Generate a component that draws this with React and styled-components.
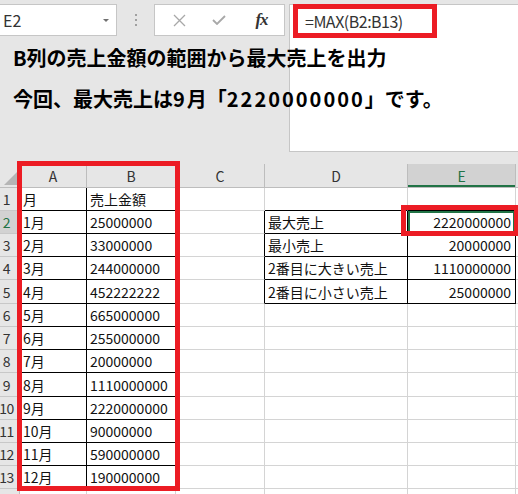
import React from "react";
import styled, { createGlobalStyle } from "styled-components";

const GREEN = "#217346";
const RED = "#ec1c24";

const GlobalStyle = createGlobalStyle`
  html, body { margin: 0; padding: 0; }
  body {
    background: #e6e6e6;
    font-family: "Noto Sans CJK JP", "Noto Sans", sans-serif;
    overflow: hidden;
  }
`;

const Page = styled.div`
  position: relative;
  width: 518px;
  height: 494px;
  overflow: hidden;
  background: #e6e6e6;
`;

const TopArea = styled.div`
  display: flex;
  height: 164px;
  padding-top: 4px;
  box-sizing: border-box;
`;

const LeftPanel = styled.div`
  width: 289px;
  flex: none;
`;

const Toolbar = styled.div`
  display: flex;
  height: 32px;
`;

const NameBox = styled.div`
  width: 117px;
  box-sizing: border-box;
  background: #fff;
  border: 1px solid #c6c6c6;
  border-left: none;
  display: flex;
  align-items: center;
  justify-content: space-between;
  padding: 0 7px 0 3px;
  font-size: 16px;
  color: #333;
`;

const DropArrow = styled.span`
  width: 0;
  height: 0;
  border-left: 3px solid transparent;
  border-right: 3px solid transparent;
  border-top: 3px solid #707070;
`;

const Grip = styled.div`
  width: 37px;
  display: flex;
  flex-direction: column;
  align-items: center;
  justify-content: center;
  gap: 3px;
`;

const GripDot = styled.span`
  width: 2px;
  height: 2px;
  background: #a0a0a0;
`;

const ButtonBox = styled.div`
  width: 131px;
  box-sizing: border-box;
  background: #fff;
  border: 1px solid #c6c6c6;
  display: grid;
  grid-template-columns: 40px 40px 1fr;
  padding-left: 4px;
  align-items: center;
  justify-items: center;
`;

const FxLabel = styled.span`
  font-family: "Liberation Serif", serif;
  font-style: italic;
  font-weight: bold;
  font-size: 17px;
  color: #333;
  letter-spacing: -1px;
`;

const FormulaPanel = styled.div`
  flex: 1;
  height: 148px;
  background: #fff;
  border: 1px solid #c6c6c6;
  border-right: none;
  box-sizing: border-box;
  padding: 5px 0 0 15px;
  font-size: 16px;
  line-height: 22px;
  letter-spacing: -0.5px;
  color: #333;
`;

const Note = styled.div`
  position: absolute;
  left: 13px;
  top: 37px;
  font-size: 20px;
  line-height: 41px;
  font-weight: bold;
  color: #000;
`;

const Digits = styled.span`
  letter-spacing: 2px;
`;

const Sheet = styled.div`
  display: grid;
  grid-template-columns: 20px 67px 89px 89px 143px 108px 1fr;
  grid-template-rows: 24px 23px 23px 23px 23px 24px 23px 23px 23px 24px 23px 23px 23px 23px 23px;
  background: #fff;
`;

const Cell = styled.div`
  box-sizing: border-box;
  border-right: 1px solid ${(p) => (p.$rightBlack ? "#000" : "#d4d4d4")};
  border-bottom: 1px solid ${(p) => (p.$bottomBlack ? "#000" : "#d4d4d4")};
  display: flex;
  align-items: center;
  justify-content: ${(p) => (p.$align === "right" ? "flex-end" : "flex-start")};
  padding: 0 4px 0 3px;
  font-size: 14px;
  color: #111;
  white-space: nowrap;
  overflow: hidden;
  background: #fff;
  box-shadow: ${(p) => (p.$selected ? `inset 0 0 0 2px ${GREEN}` : "none")};
`;

const ColHeader = styled.div`
  box-sizing: border-box;
  background: ${(p) => (p.$active ? "#d2d2d2" : "#e6e6e6")};
  color: ${(p) => (p.$active ? GREEN : "#333")};
  border-right: 1px solid #bdbdbd;
  border-bottom: 1px solid #bdbdbd;
  box-shadow: ${(p) => (p.$active ? `inset 0 -2px 0 ${GREEN}` : "none")};
  display: flex;
  align-items: center;
  justify-content: center;
  font-size: 14px;
`;

const RowHeader = styled.div`
  box-sizing: border-box;
  background: ${(p) => (p.$active ? "#d2d2d2" : "#e6e6e6")};
  color: ${(p) => (p.$active ? GREEN : "#333")};
  border-right: 1px solid #bdbdbd;
  border-bottom: 1px solid #c8c8c8;
  display: flex;
  align-items: center;
  justify-content: center;
  padding-right: 6px;
  font-size: 14px;
  letter-spacing: -0.5px;
  overflow: visible;
  white-space: nowrap;
`;

const Corner = styled.div`
  box-sizing: border-box;
  background: #e6e6e6;
  border-right: 1px solid #bdbdbd;
  border-bottom: 1px solid #bdbdbd;
  display: flex;
  align-items: flex-end;
  justify-content: flex-end;
  padding: 0 2px 2px 0;
`;

const Highlight = styled.div`
  position: absolute;
  box-sizing: border-box;
  border: 5px solid ${RED};
  pointer-events: none;
`;

const boxes = [
  { r1: 1, r2: 13, c1: 1, c2: 2 },
  { r1: 2, r2: 5, c1: 4, c2: 5 },
];
const inBox = (r, c) => boxes.some((b) => r >= b.r1 && r <= b.r2 && c >= b.c1 && c <= b.c2);

const ab = [
  ["月", "売上金額"],
  ["1月", "25000000"],
  ["2月", "33000000"],
  ["3月", "244000000"],
  ["4月", "452222222"],
  ["5月", "665000000"],
  ["6月", "255000000"],
  ["7月", "20000000"],
  ["8月", "1110000000"],
  ["9月", "2220000000"],
  ["10月", "90000000"],
  ["11月", "590000000"],
  ["12月", "190000000"],
];

const de = {
  2: ["最大売上", "2220000000"],
  3: ["最小売上", "20000000"],
  4: ["2番目に大きい売上", "1110000000"],
  5: ["2番目に小さい売上", "25000000"],
};

const cols = ["A", "B", "C", "D", "E", ""];

function cellContent(r, c) {
  if (r >= 1 && r <= 13 && (c === 1 || c === 2)) return ab[r - 1][c - 1];
  if (de[r] && c === 4) return de[r][0];
  if (de[r] && c === 5) return de[r][1];
  return "";
}

export default function App() {
  const rows = [];
  for (let r = 1; r <= 14; r++) {
    rows.push(
      <RowHeader key={`rh${r}`} $active={r === 2}>
        {r <= 13 ? r : ""}
      </RowHeader>
    );
    for (let c = 1; c <= 6; c++) {
      const text = cellContent(r, c);
      const isNum = c === 5 && /^\d+$/.test(text);
      rows.push(
        <Cell
          key={`c${r}-${c}`}
          $rightBlack={inBox(r, c) || inBox(r, c + 1)}
          $bottomBlack={inBox(r, c) || inBox(r + 1, c)}
          $align={isNum ? "right" : "left"}
          $selected={r === 2 && c === 5}
        >
          {text}
        </Cell>
      );
    }
  }

  return (
    <Page>
      <GlobalStyle />
      <TopArea>
        <LeftPanel>
          <Toolbar>
            <NameBox>
              <span>E2</span>
              <DropArrow />
            </NameBox>
            <Grip>
              <GripDot />
              <GripDot />
              <GripDot />
            </Grip>
            <ButtonBox>
              <svg width="13" height="13" viewBox="0 0 13 13">
                <path d="M1 1 L12 12 M12 1 L1 12" stroke="#a8a8a8" strokeWidth="1.3" fill="none" />
              </svg>
              <svg width="14" height="10" viewBox="0 0 14 10">
                <path d="M1 5 L5 9 L13 1" stroke="#a8a8a8" strokeWidth="1.8" fill="none" />
              </svg>
              <FxLabel>fx</FxLabel>
            </ButtonBox>
          </Toolbar>
        </LeftPanel>
        <FormulaPanel>=MAX(B2:B13)</FormulaPanel>
      </TopArea>

      <Sheet>
        <Corner>
          <svg width="13" height="13" viewBox="0 0 13 13">
            <polygon points="13,0 13,13 0,13" fill="#b5b5b5" />
          </svg>
        </Corner>
        {cols.map((h, i) => (
          <ColHeader key={`h${i}`} $active={h === "E"}>
            {h}
          </ColHeader>
        ))}
        {rows}
      </Sheet>

      <Note>
        <div>B列の売上金額の範囲から最大売上を出力</div>
        <div>
          今回、最大売上は<Digits>9</Digits>月「<Digits>2220000000</Digits>」です。
        </div>
      </Note>

      <Highlight style={{ left: 293, top: 4, width: 144, height: 34 }} />
      <Highlight style={{ left: 17, top: 161, width: 163, height: 330 }} />
      <Highlight style={{ left: 401, top: 205, width: 118, height: 31 }} />
    </Page>
  );
}
